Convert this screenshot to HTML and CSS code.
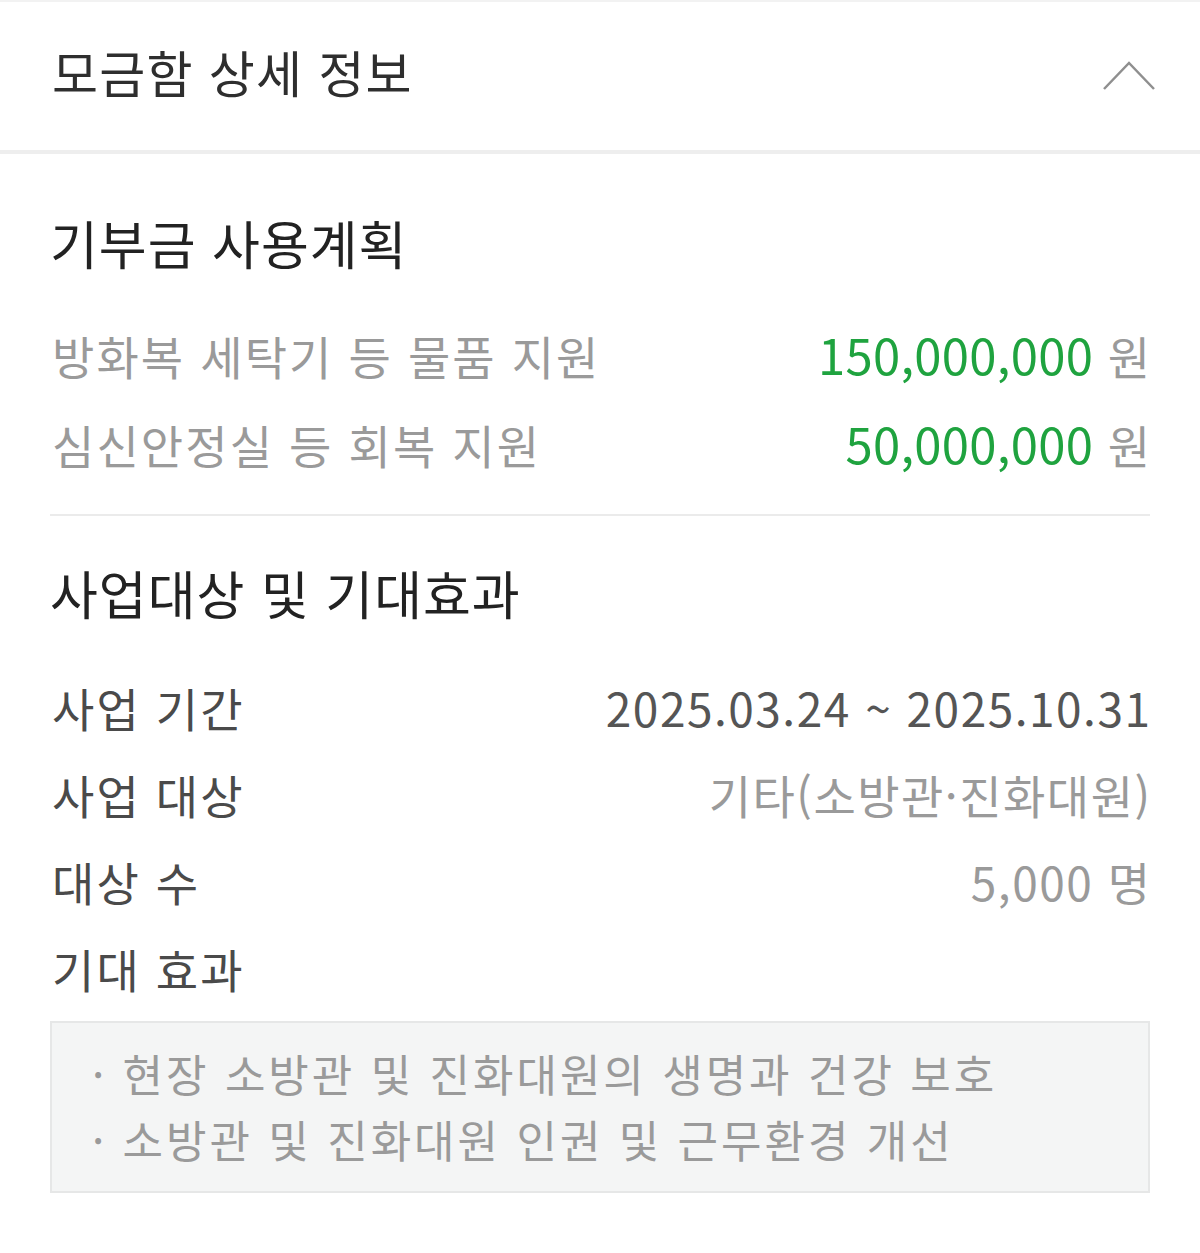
FILE: index.html
```html
<!DOCTYPE html>
<html lang="ko">
<head>
  <meta charset="UTF-8" />
  <meta name="viewport" content="width=device-width, initial-scale=1.0" />
  <title>모금함 상세 정보</title>
  <link rel="stylesheet" href="styles.css">
</head>
<body>
  <header class="panel-head">
    <h1>모금함 상세 정보</h1>
    <button class="toggle" aria-label="접기">
      <svg width="54" height="32" viewBox="0 0 54 32">
        <polyline points="2,29 27,3 52,29" fill="none" stroke="#8f8f8f" stroke-width="2.5" />
      </svg>
    </button>
  </header>

  <main class="detail">
    <section class="block">
      <h2>기부금 사용계획</h2>
      <ul class="rows plan">
        <li><span class="label">방화복 세탁기 등 물품 지원</span><span class="value"><em>150,000,000</em> 원</span></li>
        <li><span class="label">심신안정실 등 회복 지원</span><span class="value"><em>50,000,000</em> 원</span></li>
      </ul>
    </section>

    <section class="block second">
      <h2>사업대상 및 기대효과</h2>
      <ul class="rows info">
        <li><span class="label">사업 기간</span><span class="value date">2025.03.24 ~ 2025.10.31</span></li>
        <li><span class="label">사업 대상</span><span class="value">기타(소방관·진화대원)</span></li>
        <li><span class="label">대상 수</span><span class="value">5,000 명</span></li>
        <li><span class="label">기대 효과</span></li>
      </ul>
      <div class="effects">
        <p>· 현장 소방관 및 진화대원의 생명과 건강 보호</p>
        <p>· 소방관 및 진화대원 인권 및 근무환경 개선</p>
      </div>
    </section>
  </main>
</body>
</html>
```

FILE: styles.css
```css
* {
  box-sizing: border-box;
}

body {
  margin: 0;
  background: #fff;
  font-family: "Noto Sans CJK KR", "Noto Sans", sans-serif;
  color: #333;
}

.panel-head {
  height: 154px;
  display: flex;
  align-items: center;
  justify-content: space-between;
  padding: 0 44px 10px 52px;
  border-top: 2px solid #f2f2f2;
  border-bottom: 4px solid #eeeeee;
}

.panel-head h1 {
  margin: 0;
  font-size: 50px;
  font-weight: 400;
  letter-spacing: 1.2px;
  color: #2e2e2e;
}

.toggle {
  border: none;
  background: none;
  padding: 0;
  margin-top: 12px;
  cursor: pointer;
}

.detail {
  padding: 0 50px;
}

.block h2 {
  margin: 54px 0 0;
  line-height: 70px;
  font-size: 52px;
  font-weight: 400;
  letter-spacing: 1px;
  color: #222;
}

.block.second {
  border-top: 2px solid #ebebeb;
  margin-top: 26px;
}

.block.second h2 {
  margin-top: 42px;
}

.rows {
  list-style: none;
  margin: 32px 0 0;
  padding: 0 0 0 2px;
}

.rows li {
  display: flex;
  justify-content: space-between;
  align-items: baseline;
  line-height: 88px;
  font-size: 46px;
}

.label {
  letter-spacing: 2.1px;
}

.value {
  letter-spacing: 1.5px;
  margin-right: -1.5px;
}

.plan .label,
.plan .value {
  color: #9a9a9a;
}

.plan em {
  font-style: normal;
  font-size: 49px;
  letter-spacing: 0.3px;
  color: #1fa33f;
}

.info {
  margin-top: 36px;
}

.info li {
  line-height: 87px;
}

.info .label {
  color: #4a4a4a;
}

.info .value {
  color: #9a9a9a;
}

.info .value.date {
  letter-spacing: 1.5px;
  color: #555;
}

.effects {
  margin-top: 9px;
  padding: 17px 40px 19px 40px;
  background: #f4f5f5;
  border: 2px solid #e6e7e7;
}

.effects p {
  margin: 0;
  line-height: 66px;
  font-size: 44px;
  letter-spacing: 3px;
  color: #9a9a9a;
}
```
